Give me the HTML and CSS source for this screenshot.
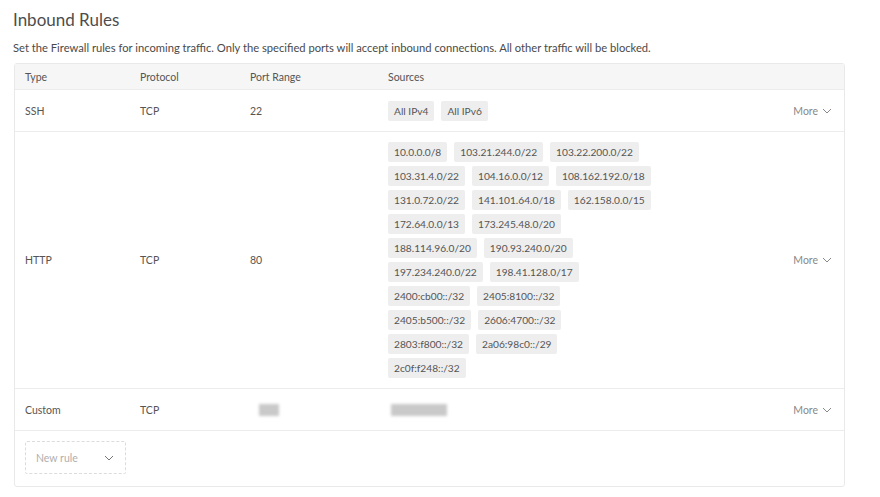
FILE: index.html
```html
<!DOCTYPE html>
<html>
<head>
<meta charset="utf-8">
<link rel="stylesheet" href="styles.css">
</head>
<body>
<div class="page">
  <h1 class="title">Inbound Rules</h1>
  <p class="desc">Set the Firewall rules for incoming traffic. Only the specified ports will accept inbound connections. All other traffic will be blocked.</p>
  <div class="table">
    <div class="row head">
      <div>Type</div><div>Protocol</div><div>Port Range</div><div>Sources</div><div></div>
    </div>
    <div class="row">
      <div>SSH</div><div>TCP</div><div>22</div>
      <div class="chips"><div class="line"><span class="chip">All IPv4</span><span class="chip">All IPv6</span></div></div>
      <div class="more">More <svg width="10" height="6" viewBox="0 0 10 6"><path d="M1 1l4 4 4-4" fill="none" stroke="#888" stroke-width="1"/></svg></div>
    </div>
    <div class="row tall">
      <div>HTTP</div><div>TCP</div><div>80</div>
      <div class="chips">
        <div class="line"><span class="chip">10.0.0.0/8</span><span class="chip">103.21.244.0/22</span><span class="chip">103.22.200.0/22</span></div>
        <div class="line"><span class="chip">103.31.4.0/22</span><span class="chip">104.16.0.0/12</span><span class="chip">108.162.192.0/18</span></div>
        <div class="line"><span class="chip">131.0.72.0/22</span><span class="chip">141.101.64.0/18</span><span class="chip">162.158.0.0/15</span></div>
        <div class="line"><span class="chip">172.64.0.0/13</span><span class="chip">173.245.48.0/20</span></div>
        <div class="line"><span class="chip">188.114.96.0/20</span><span class="chip">190.93.240.0/20</span></div>
        <div class="line"><span class="chip">197.234.240.0/22</span><span class="chip">198.41.128.0/17</span></div>
        <div class="line"><span class="chip">2400:cb00::/32</span><span class="chip">2405:8100::/32</span></div>
        <div class="line"><span class="chip">2405:b500::/32</span><span class="chip">2606:4700::/32</span></div>
        <div class="line"><span class="chip">2803:f800::/32</span><span class="chip">2a06:98c0::/29</span></div>
        <div class="line"><span class="chip">2c0f:f248::/32</span></div>
      </div>
      <div class="more">More <svg width="10" height="6" viewBox="0 0 10 6"><path d="M1 1l4 4 4-4" fill="none" stroke="#888" stroke-width="1"/></svg></div>
    </div>
    <div class="row">
      <div>Custom</div><div>TCP</div><div><span class="blur small"></span></div>
      <div><span class="blur wide"></span></div>
      <div class="more">More <svg width="10" height="6" viewBox="0 0 10 6"><path d="M1 1l4 4 4-4" fill="none" stroke="#888" stroke-width="1"/></svg></div>
    </div>
    <div class="foot">
      <div class="select"><span>New rule</span><svg width="10" height="6" viewBox="0 0 10 6"><path d="M1 1l4 4 4-4" fill="none" stroke="#777" stroke-width="1"/></svg></div>
    </div>
  </div>
</div>
</body>
</html>
```

FILE: styles.css
```css
* { box-sizing: border-box; }
body {
  margin: 0;
  background: #fff;
  font-family: Lato, "Open Sans", sans-serif;
  color: #555;
}
.page { padding: 9px 35px 0 13px; }
.title {
  margin: 0;
  font-size: 17px;
  font-weight: 400;
  color: #4d4d4d;
  line-height: 22px;
}
.desc {
  margin: 10px 0 0;
  font-size: 11.2px;
  color: #4a4a4a;
  line-height: 14px;
}
.table {
  margin: 8px 0 0 1px;
  border: 1px solid #e9e9e9;
  border-radius: 3px;
  font-size: 10.5px;
}
.row {
  display: grid;
  grid-template-columns: 115px 110px 138px 1fr auto;
  align-items: center;
  padding: 0 12px 0 10px;
  min-height: 42px;
  border-top: 1px solid #ececec;
  color: #555;
}
.row.head {
  border-top: 0;
  min-height: 25px;
  background: #f6f6f6;
  color: #555;
}
.row.tall { padding-top: 10px; padding-bottom: 10px; }
.chips { display: flex; flex-direction: column; gap: 4px; }
.line { display: flex; gap: 7px; }
.chip {
  background: #eeeeee;
  border-radius: 2px;
  padding: 0 6px;
  line-height: 20px;
  height: 20px;
  font-size: 10.2px;
  color: #555;
  white-space: nowrap;
}
.more {
  color: #888;
  display: flex;
  align-items: center;
  gap: 4px;
}
.blur {
  display: inline-block;
  height: 12px;
  background: #c9c9c9;
  filter: blur(1.5px);
  vertical-align: middle;
}
.blur.small { width: 20px; margin-left: 9px; }
.blur.wide { width: 56px; margin-left: 3px; }
.foot {
  border-top: 1px solid #ececec;
  padding: 10px 10px 12px;
}
.select {
  width: 101px;
  height: 33px;
  border: 1px dashed #dcdcdc;
  border-radius: 2px;
  display: flex;
  align-items: center;
  justify-content: space-between;
  padding: 0 11px 0 10px;
  color: #b0b0b0;
  font-size: 10.5px;
}
```
